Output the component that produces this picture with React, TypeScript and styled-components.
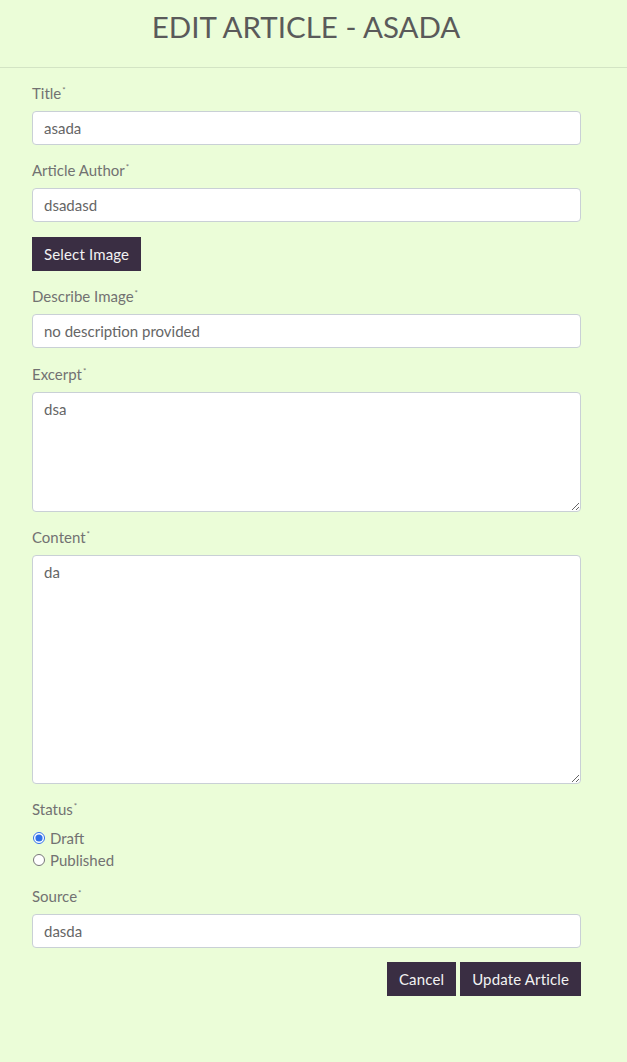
import React from "react";
import styled, { createGlobalStyle } from "styled-components";

const Global = createGlobalStyle`
  html, body { margin: 0; padding: 0; background: #ebfdd8; }
  body { font-family: Lato, "Open Sans", sans-serif; color: #666; }
  * { box-sizing: border-box; }
`;

const Page = styled.div`
  min-height: 1062px;
  background: #ebfdd8;
`;

const Header = styled.header`
  height: 68px;
  border-bottom: 1px solid #d3e4c4;
  display: flex;
  justify-content: center;
  padding: 10px 15px 0 0;
`;

const Heading = styled.h1`
  margin: 0;
  font-family: Lato, sans-serif;
  font-weight: 400;
  font-size: 29.5px;
  line-height: 34px;
  color: #5a5a5a;
`;

const Form = styled.form`
  padding: 15px 46px 0 32px;
  display: flex;
  flex-direction: column;
`;

const Group = styled.div<{ $gap?: number }>`
  display: flex;
  flex-direction: column;
  margin-bottom: ${(p) => p.$gap ?? 15}px;
`;

const Label = styled.label`
  font-size: 15px;
  line-height: 21px;
  color: #727272;
  margin-bottom: 7px;
`;

const Star = styled.span`
  font-size: 8px;
  line-height: 0;
  position: relative;
  top: -6px;
  margin-left: 1px;
`;

const Input = styled.input`
  height: 34px;
  width: 100%;
  border: 1px solid #c9d0d6;
  border-radius: 4px;
  background: #fff;
  padding: 0 11px;
  font-family: Lato, sans-serif;
  font-size: 15px;
  color: #666;
  outline: none;
`;

const TextArea = styled.textarea<{ $h: number }>`
  height: ${(p) => p.$h}px;
  width: 100%;
  border: 1px solid #c9d0d6;
  border-radius: 4px;
  background: #fff;
  padding: 6px 11px;
  font-family: Lato, sans-serif;
  font-size: 15px;
  line-height: 21px;
  color: #666;
  outline: none;
  resize: vertical;
  display: block;
`;

const Button = styled.button`
  height: 34px;
  background: #3a2e43;
  color: #f2f2f2;
  border: none;
  border-radius: 0;
  padding: 0 12px;
  font-family: Lato, sans-serif;
  font-size: 15px;
  letter-spacing: 0.15px;
  cursor: pointer;
`;

const ImageButtonRow = styled.div`
  display: flex;
  margin-bottom: 15px;
`;

const RadioRow = styled.label`
  display: flex;
  align-items: center;
  height: 22px;
  font-size: 15px;
  color: #727272;
  input {
    margin: 0 5px 0 1px;
    width: 12px;
    height: 12px;
    accent-color: #2f6fe8;
  }
`;

const RadioGroup = styled.div`
  display: flex;
  flex-direction: column;
`;

const Actions = styled.div`
  display: flex;
  justify-content: flex-end;
  gap: 4px;
  margin-top: -1px;
`;

const Req = () => <Star>*</Star>;

export default function App() {
  return (
    <Page>
      <Global />
      <Header>
        <Heading>EDIT ARTICLE - ASADA</Heading>
      </Header>
      <Form onSubmit={(e) => e.preventDefault()}>
        <Group>
          <Label>Title<Req /></Label>
          <Input defaultValue="asada" />
        </Group>
        <Group>
          <Label>Article Author<Req /></Label>
          <Input defaultValue="dsadasd" />
        </Group>
        <ImageButtonRow>
          <Button type="button">Select Image</Button>
        </ImageButtonRow>
        <Group $gap={16}>
          <Label>Describe Image<Req /></Label>
          <Input defaultValue="no description provided" />
        </Group>
        <Group>
          <Label>Excerpt<Req /></Label>
          <TextArea $h={120} defaultValue="dsa" />
        </Group>
        <Group>
          <Label>Content<Req /></Label>
          <TextArea $h={229} defaultValue="da" />
        </Group>
        <Group>
          <Label>Status<Req /></Label>
          <RadioGroup>
            <RadioRow>
              <input type="radio" name="status" defaultChecked />
              Draft
            </RadioRow>
            <RadioRow>
              <input type="radio" name="status" />
              Published
            </RadioRow>
          </RadioGroup>
        </Group>
        <Group>
          <Label>Source<Req /></Label>
          <Input defaultValue="dasda" />
        </Group>
        <Actions>
          <Button type="button">Cancel</Button>
          <Button type="submit">Update Article</Button>
        </Actions>
      </Form>
    </Page>
  );
}
